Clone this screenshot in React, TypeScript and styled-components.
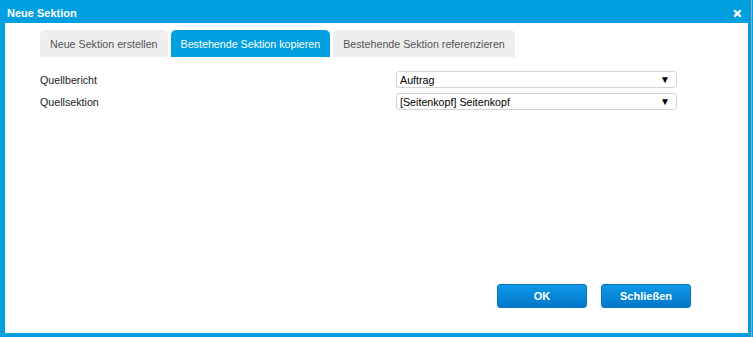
import styled, {createGlobalStyle} from "styled-components";

const GlobalStyle = createGlobalStyle`
  html, body {
    margin: 0;
    padding: 0;
    background: #ffffff;
  }
  body {
    font-family: "Liberation Sans", Arial, sans-serif;
    font-size: 11px;
  }
`

const tabs = ['Neue Sektion erstellen', 'Bestehende Sektion kopieren', 'Bestehende Sektion referenzieren']

const fields = [
    {label: 'Quellbericht', value: 'Auftrag'},
    {label: 'Quellsektion', value: '[Seitenkopf] Seitenkopf'},
]

const App = () => {
    return (
        <>
            <GlobalStyle/>
            <Dialog>
                <TitleBar>
                    <Title>Neue Sektion</Title>
                    <Close aria-label='Schließen'>
                        <svg width="9" height="9" viewBox="0 0 9 9">
                            <path d="M1.2 1.2 L7.8 7.8 M7.8 1.2 L1.2 7.8" stroke="#fff" strokeWidth="2.3"/>
                        </svg>
                    </Close>
                </TitleBar>
                <Body>
                    <TabBar>
                        {tabs.map((t, i) => <Tab key={t} active={i === 1}>{t}</Tab>)}
                    </TabBar>
                    <Form>
                        {fields.map(f => (
                            <Row key={f.label}>
                                <Label>{f.label}</Label>
                                <SelectBox>
                                    <Select defaultValue={f.value}>
                                        <option>{f.value}</option>
                                    </Select>
                                    <Arrow>▼</Arrow>
                                </SelectBox>
                            </Row>
                        ))}
                    </Form>
                    <Footer>
                        <Button>OK</Button>
                        <Button>Schließen</Button>
                    </Footer>
                </Body>
            </Dialog>
        </>
    )
}

const Dialog = styled.div`
  width: 753px;
  height: 337px;
  box-sizing: border-box;
  background: #019fe0;
  padding: 0 5px 4px 5px;
  display: flex;
  flex-direction: column;
  box-shadow: inset -1px 0 0 #019fe0, inset -2px 0 0 #9aa6ad;
`
const TitleBar = styled.div`
  height: 23px;
  display: flex;
  align-items: center;
  justify-content: space-between;
  padding: 3px 2px 0 2px;
  box-sizing: border-box;
`
const Title = styled.div`
  color: #ffffff;
  font-weight: bold;
  font-size: 11px;
`
const Close = styled.div`
  width: 9px;
  height: 9px;
  margin-right: 4px;
  display: flex;
`
const Body = styled.div`
  flex: 1;
  background: #ffffff;
  display: flex;
  flex-direction: column;
  padding: 7px 57px 25px 35px;
`
const TabBar = styled.div`
  display: flex;
  gap: 3px;
`
const Tab = styled.div<{ active?: boolean }>`
  height: 27px;
  box-sizing: border-box;
  padding: 0 10px;
  display: flex;
  align-items: center;
  border-radius: 5px 5px 0 0;
  background: ${p => p.active ? '#019fe0' : '#eeeeee'};
  color: ${p => p.active ? '#ffffff' : '#555555'};
  font-size: 10.7px;
`
const Form = styled.div`
  display: flex;
  flex-direction: column;
  gap: 5px;
  margin-top: 14px;
`
const Row = styled.div`
  display: flex;
  align-items: center;
`
const Label = styled.div`
  width: 356px;
  color: #222;
  font-size: 10.7px;
`
const SelectBox = styled.div`
  width: 281px;
  height: 17px;
  box-sizing: border-box;
  border: 1px solid #d4d4d4;
  border-radius: 3px;
  display: flex;
  align-items: center;
  padding: 0 6px 0 3px;
`
const Select = styled.select`
  flex: 1;
  appearance: none;
  border: none;
  background: transparent;
  font-family: "Liberation Sans", Arial, sans-serif;
  font-size: 10.7px;
  color: #000;
  padding: 0;
  outline: none;
`
const Arrow = styled.span`
  font-size: 10px;
  line-height: 10px;
  color: #000;
`
const Footer = styled.div`
  margin-top: auto;
  display: flex;
  justify-content: flex-end;
  gap: 14px;
`
const Button = styled.button`
  width: 90px;
  height: 24px;
  border: 1px solid #0a78c4;
  border-radius: 3px;
  background: linear-gradient(#0e99e6, #0276c9);
  color: #ffffff;
  font-family: "Liberation Sans", Arial, sans-serif;
  font-weight: bold;
  font-size: 11px;
  padding: 0;
`

export default App
